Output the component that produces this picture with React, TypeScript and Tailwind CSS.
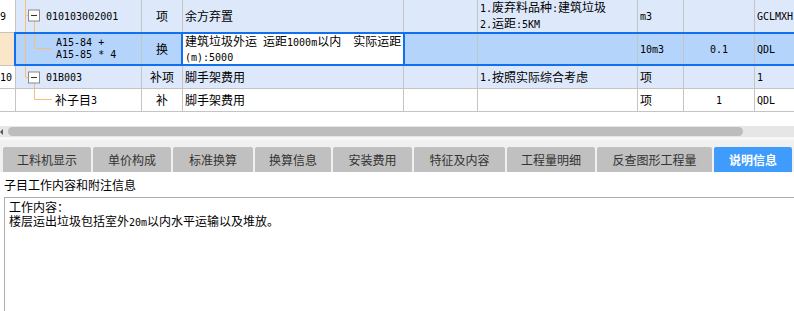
import React from "react";

const ASCII = /^[\x20-\x7e]+$/;

// half-width runs in a narrow mono, like the bitmap song font of the original
function T({ s }: { s: string }) {
  const parts = s.split(/([\x20-\x7e]+)/).filter(Boolean);
  return (
    <>
      {parts.map((p, i) =>
        ASCII.test(p) ? (
          <span key={i} className="whitespace-pre font-['DejaVu_Sans_Mono'] text-[10px]">
            {p}
          </span>
        ) : (
          <span key={i}>{p}</span>
        )
      )}
    </>
  );
}

const ORANGE = "#f5c07c";

function TreeBox({ y }: { y: number }) {
  return (
    <g>
      <rect x={12.5} y={y - 5} width={11} height={11} fill="#fff" stroke="#8a8a8a" />
      <line x1={15} y1={y + 0.5} x2={21} y2={y + 0.5} stroke="#333" />
    </g>
  );
}

function Tree({ kind }: { kind: "p1" | "c1" | "p2" | "c2" }) {
  return (
    <svg className="pointer-events-none absolute inset-0 h-full w-full" aria-hidden>
      {kind === "p1" && (
        <>
          <line x1={9.5} y1={0} x2={9.5} y2={40} stroke={ORANGE} />
          <line x1={9.5} y1={15.5} x2={12.5} y2={15.5} stroke={ORANGE} />
          <line x1={18.5} y1={21} x2={18.5} y2={40} stroke={ORANGE} />
          <TreeBox y={15} />
        </>
      )}
      {kind === "c1" && (
        <>
          <line x1={9.5} y1={0} x2={9.5} y2={40} stroke={ORANGE} />
          <line x1={18.5} y1={0} x2={18.5} y2={15.5} stroke={ORANGE} />
          <line x1={18.5} y1={15.5} x2={36} y2={15.5} stroke={ORANGE} />
        </>
      )}
      {kind === "p2" && (
        <>
          <line x1={9.5} y1={0} x2={9.5} y2={11.5} stroke={ORANGE} />
          <line x1={9.5} y1={11.5} x2={12.5} y2={11.5} stroke={ORANGE} />
          <line x1={18.5} y1={17} x2={18.5} y2={30} stroke={ORANGE} />
          <TreeBox y={11} />
        </>
      )}
      {kind === "c2" && (
        <>
          <line x1={18.5} y1={0} x2={18.5} y2={10.5} stroke={ORANGE} />
          <line x1={18.5} y1={10.5} x2={36} y2={10.5} stroke={ORANGE} />
        </>
      )}
    </svg>
  );
}

const cell = "flex items-center overflow-hidden border-r border-[#c4c4c4] whitespace-nowrap";
const grid =
  "grid grid-cols-[16px_126px_41px_221px_74px_160px_46px_71px_1fr] border-b border-[#c4c4c4]";

const tabs = [
  { label: "工料机显示", w: "w-[88px]" },
  { label: "单价构成", w: "w-[78px]" },
  { label: "标准换算", w: "w-[80px]" },
  { label: "换算信息", w: "w-[76px]" },
  { label: "安装费用", w: "w-[79px]" },
  { label: "特征及内容", w: "w-[91px]" },
  { label: "工程量明细", w: "w-[88px]" },
  { label: "反查图形工程量", w: "w-[115px]" },
  { label: "说明信息", w: "w-[78px]", active: true },
];

export default function App() {
  return (
    <div className="relative flex h-[311px] w-[794px] flex-col overflow-hidden bg-white font-['Noto_Sans_CJK_SC',sans-serif] text-[12px] text-black">
      {/* grid */}
      <div className="relative h-[126px] shrink-0">
        <div className={`${grid} h-[33px] bg-[#dde8fb]`}>
          <div className={`${cell} bg-white`}>
            <T s="9" />
          </div>
          <div className={`${cell} relative pl-[30px]`}>
            <Tree kind="p1" />
            <T s="010103002001" />
          </div>
          <div className={`${cell} justify-center`}>项</div>
          <div className={`${cell} pl-[2px]`}>余方弃置</div>
          <div className={cell} />
          <div className="flex flex-col justify-center whitespace-nowrap border-r border-[#c4c4c4] pl-[2px] leading-[14px]">
            <div>
              <T s="1." />
              废弃料品种
              <T s=":" />
              建筑垃圾
            </div>
            <div>
              <T s="2." />
              运距
              <T s=":5KM" />
            </div>
          </div>
          <div className={`${cell} pl-[2px]`}>
            <T s="m3" />
          </div>
          <div className={cell} />
          <div className={`${cell} border-r-0 pl-[2px]`}>
            <T s="GCLMXH" />
          </div>
        </div>

        <div className={`${grid} h-[33px] bg-[#b5d4fc]`}>
          <div className={`${cell} bg-[#fce6c9]`} />
          <div className={`${cell} relative flex-col items-start justify-center pl-[40px] leading-[12px]`}>
            <Tree kind="c1" />
            <T s="A15-84 +" />
            <T s="A15-85 * 4" />
          </div>
          <div className={`${cell} justify-center`}>换</div>
          <div className={`${cell} flex-col items-start justify-center bg-white pl-[2px] leading-[13px]`}>
            <div>
              建筑垃圾外运
              <T s=" " />
              运距
              <T s="1000m" />
              以内
              <T s="  " />
              实际运距
            </div>
            <div>
              <T s="(m):5000" />
            </div>
          </div>
          <div className={cell} />
          <div className={cell} />
          <div className={`${cell} pl-[2px]`}>
            <T s="10m3" />
          </div>
          <div className={`${cell} justify-center`}>
            <T s="0.1" />
          </div>
          <div className={`${cell} border-r-0 pl-[2px]`}>
            <T s="QDL" />
          </div>
        </div>

        <div className={`${grid} h-[23px] bg-[#dde8fb]`}>
          <div className={`${cell} bg-white`}>
            <T s="10" />
          </div>
          <div className={`${cell} relative pl-[30px]`}>
            <Tree kind="p2" />
            <T s="01B003" />
          </div>
          <div className={`${cell} justify-center`}>补项</div>
          <div className={`${cell} pl-[2px]`}>脚手架费用</div>
          <div className={cell} />
          <div className={`${cell} pl-[2px]`}>
            <T s="1." />
            按照实际综合考虑
          </div>
          <div className={`${cell} pl-[2px]`}>项</div>
          <div className={cell} />
          <div className={`${cell} border-r-0 pl-[2px]`}>
            <T s="1" />
          </div>
        </div>

        <div className={`${grid} h-[23px] bg-white`}>
          <div className={cell} />
          <div className={`${cell} relative pl-[39px]`}>
            <Tree kind="c2" />
            补子目
            <T s="3" />
          </div>
          <div className={`${cell} justify-center`}>补</div>
          <div className={`${cell} pl-[2px]`}>脚手架费用</div>
          <div className={cell} />
          <div className={cell} />
          <div className={`${cell} pl-[2px]`}>项</div>
          <div className={`${cell} justify-center`}>
            <T s="1" />
          </div>
          <div className={`${cell} border-r-0 pl-[2px]`}>
            <T s="QDL" />
          </div>
        </div>

        {/* focus frame of the current row and its editing cell */}
        <div className="pointer-events-none absolute left-[14px] top-[32px] h-[34px] w-[790px] border-2 border-[#1170ef]" />
        <div className="pointer-events-none absolute left-[181px] top-[32px] h-[34px] w-[224px] border-x-2 border-[#1170ef]" />
      </div>

      {/* horizontal scrollbar */}
      <div className="flex h-[11px] shrink-0 items-center bg-[#e6e6e6]">
        <div className="h-0 w-0 border-y-[3px] border-r-[3px] border-y-transparent border-r-[#555]" />
        <div className="ml-[5px] h-[9px] w-[735px] rounded-full bg-[#bdbdbd]" />
      </div>

      {/* tabs */}
      <div className="flex h-[35px] shrink-0 items-end gap-[2px] border-t-[3px] border-[#f7f7f7] bg-[#f0f0f0] pl-[3px]">
        {tabs.map((t) => (
          <div
            key={t.label}
            className={`flex h-[25px] ${t.w} items-center justify-center rounded-t-[2px] text-[12px] ${
              t.active ? "bg-[#409cfc] font-bold text-white" : "bg-[#c0c0c0] text-[#333]"
            }`}
          >
            {t.label}
          </div>
        ))}
      </div>

      <div className="flex h-[25px] shrink-0 items-center pl-[4px] text-[12px]">子目工作内容和附注信息</div>

      <div className="ml-[4px] flex-1 border-l border-t border-[#adadad] pl-[4px] pt-[2px] text-[12px] leading-[14px]">
        <div>工作内容：</div>
        <div>
          楼层运出垃圾包括室外
          <T s="20m" />
          以内水平运输以及堆放。
        </div>
      </div>
    </div>
  );
}
